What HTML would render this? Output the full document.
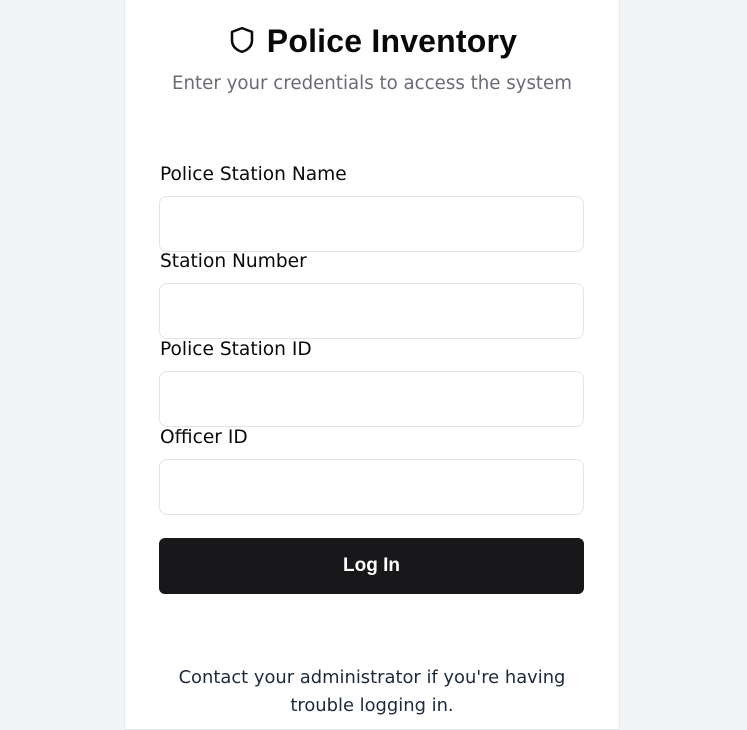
<!DOCTYPE html>
<html><head><style>
body{margin:0;background:#f3f4f6;font-family:"DejaVu Sans",sans-serif;width:747px;height:715px;overflow:hidden;position:relative}
.card{position:absolute;left:124px;top:-2px;width:494px;height:730px;background:#fff;border:1px solid #e5e7eb}
.t{position:absolute;left:0;right:0;top:24px;text-align:center;font-family:"Liberation Sans",sans-serif;font-size:32px;font-weight:bold;color:#09090b;letter-spacing:0.2px}
.t svg{vertical-align:-4px;margin-right:10px}
.s{position:absolute;left:0;right:0;top:74px;text-align:center;font-size:18.2px;color:#6b6b74}
.l{position:absolute;left:35px;font-size:18.6px;color:#09090b}
.i{position:absolute;left:34px;width:423px;height:54px;border:1px solid #e4e4e7;border-radius:8px}
.b{position:absolute;left:34px;top:539px;width:425px;height:56px;background:#18181b;border-radius:6px;color:#fff;font-family:"Liberation Sans",sans-serif;font-size:19px;font-weight:bold;text-align:center;line-height:56px}
.f{position:absolute;left:0;right:0;top:665px;text-align:center;font-size:17.9px;color:#1e293b;line-height:28px}
</style></head><body>
<div class="card">
<div class="t"><svg width="30" height="32" viewBox="0 0 24 24" fill="none" stroke="#09090b" stroke-width="2" stroke-linejoin="round"><path d="M12 2.5 L20 5.5 V12 C20 17 16.5 20 12 21.5 C7.5 20 4 17 4 12 V5.5 Z"/></svg>Police Inventory</div>
<div class="s">Enter your credentials to access the system</div>
<div class="l" style="top:165px">Police Station Name</div>
<div class="i" style="top:197px"></div>
<div class="l" style="top:252px">Station Number</div>
<div class="i" style="top:284px"></div>
<div class="l" style="top:340px">Police Station ID</div>
<div class="i" style="top:372px"></div>
<div class="l" style="top:428px">Officer ID</div>
<div class="i" style="top:460px"></div>
<div class="b">Log In</div>
<div class="f">Contact your administrator if you're having<br>trouble logging in.</div>
</div>
</body></html>
